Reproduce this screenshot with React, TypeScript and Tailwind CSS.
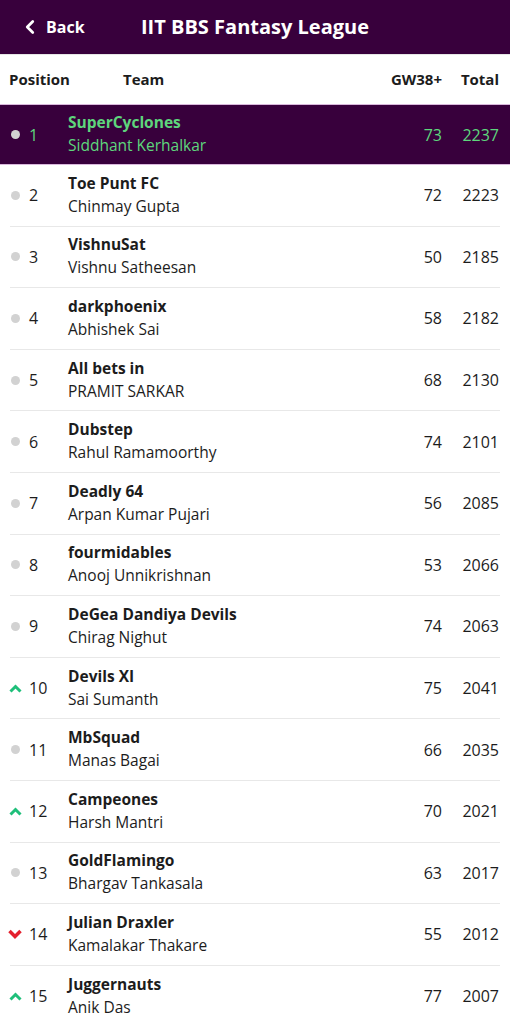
import { ChevronLeft } from "lucide-react"

type Move = "same" | "up" | "down"

type Entry = {
  rank: number
  team: string
  manager: string
  gw: number
  total: number
  move: Move
}

const entries: Entry[] = [
  { rank: 1, team: "SuperCyclones", manager: "Siddhant Kerhalkar", gw: 73, total: 2237, move: "same" },
  { rank: 2, team: "Toe Punt FC", manager: "Chinmay Gupta", gw: 72, total: 2223, move: "same" },
  { rank: 3, team: "VishnuSat", manager: "Vishnu Satheesan", gw: 50, total: 2185, move: "same" },
  { rank: 4, team: "darkphoenix", manager: "Abhishek Sai", gw: 58, total: 2182, move: "same" },
  { rank: 5, team: "All bets in", manager: "PRAMIT SARKAR", gw: 68, total: 2130, move: "same" },
  { rank: 6, team: "Dubstep", manager: "Rahul Ramamoorthy", gw: 74, total: 2101, move: "same" },
  { rank: 7, team: "Deadly 64", manager: "Arpan Kumar Pujari", gw: 56, total: 2085, move: "same" },
  { rank: 8, team: "fourmidables", manager: "Anooj Unnikrishnan", gw: 53, total: 2066, move: "same" },
  { rank: 9, team: "DeGea Dandiya Devils", manager: "Chirag Nighut", gw: 74, total: 2063, move: "same" },
  { rank: 10, team: "Devils XI", manager: "Sai Sumanth", gw: 75, total: 2041, move: "up" },
  { rank: 11, team: "MbSquad", manager: "Manas Bagai", gw: 66, total: 2035, move: "same" },
  { rank: 12, team: "Campeones", manager: "Harsh Mantri", gw: 70, total: 2021, move: "up" },
  { rank: 13, team: "GoldFlamingo", manager: "Bhargav Tankasala", gw: 63, total: 2017, move: "same" },
  { rank: 14, team: "Julian Draxler", manager: "Kamalakar Thakare", gw: 55, total: 2012, move: "down" },
  { rank: 15, team: "Juggernauts", manager: "Anik Das", gw: 77, total: 2007, move: "up" },
]

const MoveIcon = ({ move }: { move: Move }) => {
  if (move === "up")
    return (
      <svg width="13" height="9" viewBox="0 0 13 9">
        <path d="M1.5 7.5 L6.5 2.5 L11.5 7.5" fill="none" stroke="#1fbf7a" strokeWidth="3" />
      </svg>
    )
  if (move === "down")
    return (
      <svg width="14" height="10" viewBox="0 0 14 10">
        <path d="M1.5 2 L7 7.5 L12.5 2" fill="none" stroke="#e4202e" strokeWidth="3.5" />
      </svg>
    )
  return <span className="block w-[9px] h-[9px] rounded-full bg-[#d2d2d2] ml-[1px]" />
}

const Row = ({ e }: { e: Entry }) => {
  const top = e.rank === 1
  return (
    <div
      className={
        top
          ? "flex items-center h-[61px] bg-[#38003c] text-[#5ed67c] border-y border-[#d9b8dc]"
          : "flex items-center h-[60.6px] text-[#1c1c1c]"
      }
    >
      <div className="w-[68px] flex items-center pl-[8px] shrink-0">
        <div className="w-[14px] flex justify-center">
          <MoveIcon move={e.move} />
        </div>
        <span className="ml-[7px] text-[16px]">{e.rank}</span>
      </div>
      <div className="flex-1 flex flex-col leading-[23px] pb-[1px]">
        <span className="font-bold text-[15.5px]">{e.team}</span>
        <span className="text-[15.5px]">{e.manager}</span>
      </div>
      <div className="w-[50px] text-right text-[16px]">{e.gw}</div>
      <div className="w-[68px] pr-[11px] text-right text-[16px]">{e.total}</div>
    </div>
  )
}

export default function App() {
  return (
    <div className="w-[510px] h-[1024px] overflow-hidden bg-white font-['Open_Sans',sans-serif]">
      <div className="h-[54px] bg-[#38003c] flex items-center text-white relative">
        <div className="flex items-center pl-[19px] gap-[5px]">
          <ChevronLeft size={22} strokeWidth={3} />
          <span className="font-bold text-[16px]">Back</span>
        </div>
        <div className="absolute left-0 right-0 text-center font-bold text-[20px] pointer-events-none">
          IIT BBS Fantasy League
        </div>
      </div>
      <div className="h-[50px] flex items-center font-bold text-[15px] text-[#1c1c1c] border-t border-[#e6e6e6]">
        <div className="w-[123px] pl-[9px] shrink-0">Position</div>
        <div className="flex-1">Team</div>
        <div className="w-[60px] text-right">GW38+</div>
        <div className="w-[68px] pr-[11px] text-right">Total</div>
      </div>
      <div>
        {entries.map((e) => (
          <div key={e.rank}>
            <Row e={e} />
            {e.rank > 1 && <div className="mx-[10px] h-px bg-[#e8e8e8]" />}
          </div>
        ))}
      </div>
    </div>
  )
}
